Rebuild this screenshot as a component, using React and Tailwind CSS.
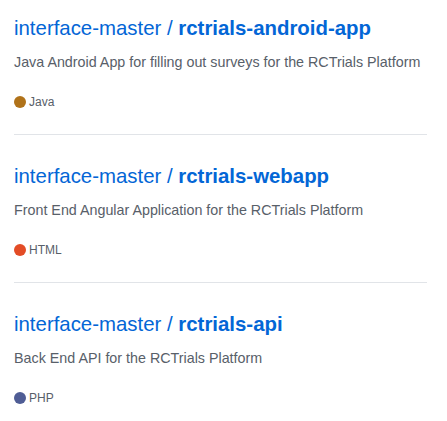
const REPOS = [
  {
    owner: 'interface-master',
    name: 'rctrials-android-app',
    description: 'Java Android App for filling out surveys for the RCTrials Platform',
    language: 'Java',
    color: 'bg-[#b07219]',
  },
  {
    owner: 'interface-master',
    name: 'rctrials-webapp',
    description: 'Front End Angular Application for the RCTrials Platform',
    language: 'HTML',
    color: 'bg-[#e34c26]',
  },
  {
    owner: 'interface-master',
    name: 'rctrials-api',
    description: 'Back End API for the RCTrials Platform',
    language: 'PHP',
    color: 'bg-[#4f5d95]',
  },
];

function RepoItem({ repo, first, last }) {
  return (
    <li className={`${first ? 'pt-0' : 'pt-[26px]'} ${last ? '' : 'border-b border-[#e1e4e8] pb-[23px]'}`}>
      <h3 className="text-[20.4px] leading-[30px] text-[#0366d6]">
        <a href="#" className="text-[#0366d6]">
          {repo.owner} / <span className="font-bold">{repo.name}</span>
        </a>
      </h3>
      <p className="mt-[9px] text-[14.3px] leading-[21px] text-[#586069]">{repo.description}</p>
      <div className="mt-[20px] flex h-[18px] items-center text-[12px] text-[#586069]">
        <span className={`mr-[3px] inline-block h-[12px] w-[12px] rounded-full ${repo.color}`} />
        <span>{repo.language}</span>
      </div>
    </li>
  );
}

export default function App() {
  return (
    <div className="min-h-screen bg-white pl-[14px] pr-[20px] pt-[13px] font-['Liberation_Sans',Arial,sans-serif]">
      <ul>
        {REPOS.map((repo, i) => (
          <RepoItem key={repo.name} repo={repo} first={i === 0} last={i === REPOS.length - 1} />
        ))}
      </ul>
    </div>
  );
}
